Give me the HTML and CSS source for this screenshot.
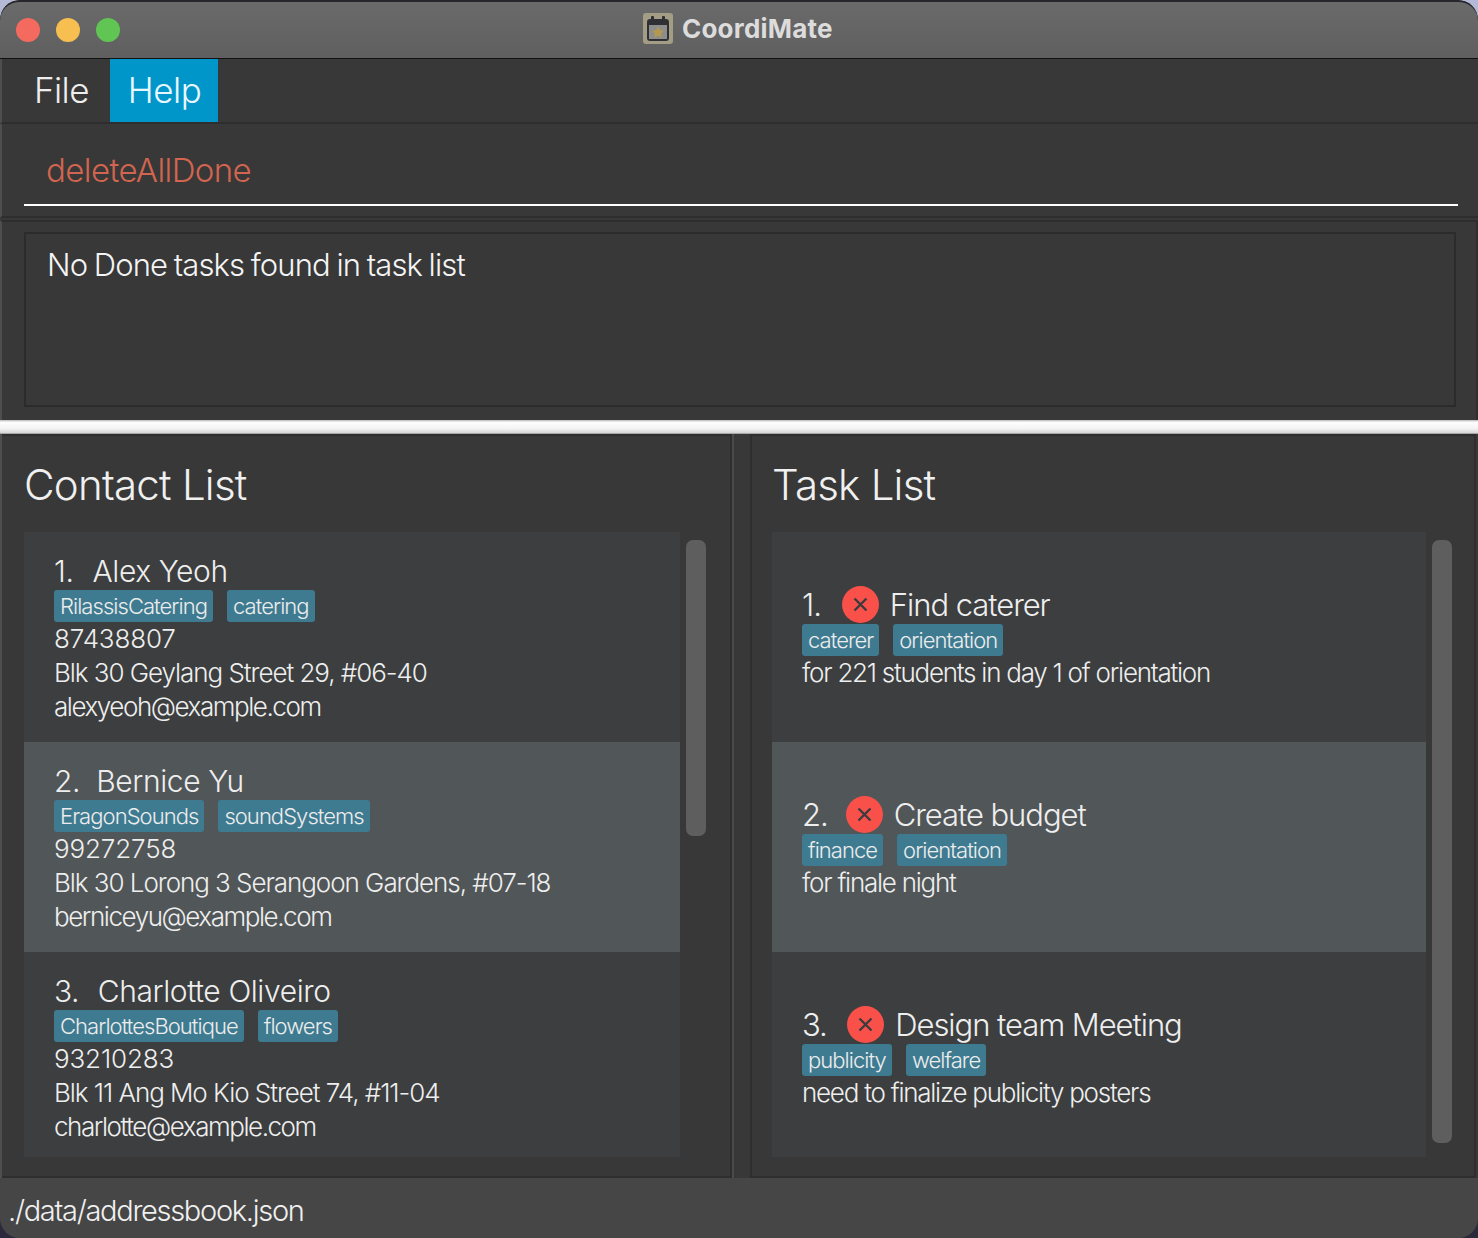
FILE: index.html
```html
<!DOCTYPE html>
<html lang="en">
<head>
<meta charset="utf-8">
<title>CoordiMate</title>
<link rel="stylesheet" href="styles.css">
</head>
<body>
<div class="window">
  <header class="titlebar">
    <div class="lights"><span class="light red"></span><span class="light yellow"></span><span class="light green"></span></div>
    <div class="app-title">
      <svg class="app-icon" width="30" height="31" viewBox="0 0 30 31"><rect width="30" height="31" rx="3" fill="#a39d86"/><rect x="4" y="6" width="22" height="22" rx="3" fill="#2f3033"/><rect x="8" y="3" width="3" height="6" rx="1" fill="#2f3033"/><rect x="19" y="3" width="3" height="6" rx="1" fill="#2f3033"/><rect x="6" y="12" width="18" height="14" fill="#8d8d8b"/><path d="M15 13.5l1.9 3.7 4.1.6-3 2.9.7 4-3.7-1.9-3.7 1.9.7-4-3-2.9 4.1-.6z" fill="#b39a4e"/></svg>
      <span class="app-name">CoordiMate</span>
    </div>
  </header>
  <nav class="menubar">
    <span class="menu-item">File</span>
    <span class="menu-item active">Help</span>
  </nav>
  <section class="command"><div class="command-input">deleteAllDone</div></section>
  <section class="result"><div class="result-box">No Done tasks found in task list</div></section>
  <div class="splitter"></div>
  <main class="panes">
    <section class="pane contact-pane">
      <h2 class="pane-title">Contact List</h2>
      <div class="list-wrap">
        <div class="list">
          <article class="cell contact">
            <div class="name"><span class="idx">1.</span>&nbsp; Alex Yeoh</div>
            <div class="tags"><span class="tag">RilassisCatering</span><span class="tag">catering</span></div>
            <div class="line phone">87438807</div>
            <div class="line address">Blk 30 Geylang Street 29, #06-40</div>
            <div class="line email">alexyeoh@example.com</div>
          </article>
          <article class="cell contact alt">
            <div class="name"><span class="idx">2.</span>&nbsp; Bernice Yu</div>
            <div class="tags"><span class="tag">EragonSounds</span><span class="tag">soundSystems</span></div>
            <div class="line phone">99272758</div>
            <div class="line address">Blk 30 Lorong 3 Serangoon Gardens, #07-18</div>
            <div class="line email">berniceyu@example.com</div>
          </article>
          <article class="cell contact last">
            <div class="name"><span class="idx">3.</span>&nbsp; Charlotte Oliveiro</div>
            <div class="tags"><span class="tag">CharlottesBoutique</span><span class="tag">flowers</span></div>
            <div class="line phone">93210283</div>
            <div class="line address">Blk 11 Ang Mo Kio Street 74, #11-04</div>
            <div class="line email">charlotte@example.com</div>
          </article>
        </div>
        <div class="scroll-track"><div class="thumb short"></div></div>
      </div>
    </section>
    <div class="divider"></div>
    <section class="pane task-pane">
      <h2 class="pane-title">Task List</h2>
      <div class="list-wrap">
        <div class="list">
          <article class="cell task">
            <div class="name task-name"><span class="idx">1.</span><svg class="status" viewBox="0 0 37 37"><circle cx="18.5" cy="18.5" r="18.5" fill="#f9504a"/><path d="M12.5 12.5l12 12M24.500 12.500l-12 12" stroke="#3b3b3f" stroke-width="2.400" fill="none"/></svg><span>Find caterer</span></div>
            <div class="tags"><span class="tag">caterer</span><span class="tag">orientation</span></div>
            <div class="line description">for 221 students in day 1 of orientation</div>
          </article>
          <article class="cell task alt">
            <div class="name task-name"><span class="idx">2.</span><svg class="status" viewBox="0 0 37 37"><circle cx="18.5" cy="18.5" r="18.5" fill="#f9504a"/><path d="M12.5 12.5l12 12M24.500 12.500l-12 12" stroke="#3b3b3f" stroke-width="2.400" fill="none"/></svg><span>Create budget</span></div>
            <div class="tags"><span class="tag">finance</span><span class="tag">orientation</span></div>
            <div class="line description">for finale night</div>
          </article>
          <article class="cell task last">
            <div class="name task-name"><span class="idx">3.</span><svg class="status" viewBox="0 0 37 37"><circle cx="18.5" cy="18.5" r="18.5" fill="#f9504a"/><path d="M12.5 12.5l12 12M24.500 12.500l-12 12" stroke="#3b3b3f" stroke-width="2.400" fill="none"/></svg><span>Design team Meeting</span></div>
            <div class="tags"><span class="tag">publicity</span><span class="tag">welfare</span></div>
            <div class="line description">need to finalize publicity posters</div>
          </article>
        </div>
        <div class="scroll-track"><div class="thumb long"></div></div>
      </div>
    </section>
  </main>
  <footer class="status-bar">./data/addressbook.json</footer>
</div>
</body>
</html>
```

FILE: styles.css
```css
* { box-sizing: border-box; }
html, body { margin: 0; height: 100%; }
body {
  width: 1478px;
  height: 1238px;
  overflow: hidden;
  background: linear-gradient(#b4b9d6 0 50%, #2a2a3c 50% 100%);
  font-family: "Inter", "Liberation Sans", sans-serif;
  color: #eeeeee;
}
.window {
  width: 1478px;
  height: 1238px;
  border-radius: 20px;
  overflow: hidden;
  display: flex;
  flex-direction: column;
  background: #383838;
}
.titlebar {
  height: 59px;
  flex: none;
  display: flex;
  align-items: center;
  padding: 0 0 2px 16px;
  background: linear-gradient(#6a6a6a, #5f5f5f);
  border-top: 2px solid #26262c;
  border-bottom: 1px solid #111111;
  border-radius: 20px 20px 0 0;
}
.lights { display: flex; gap: 16px; margin-top: 1px; }
.light { width: 24px; height: 24px; border-radius: 50%; }
.red { background: #f46a5e; }
.yellow { background: #f6bf4f; }
.green { background: #61c554; }
.app-title {
  display: flex;
  align-items: center;
  gap: 9px;
  margin: -1px 0 0 523px;
}
.app-icon { flex: none; }
.app-name {
  font-size: 26px;
  font-weight: 700;
  color: #dcdcdc;
  letter-spacing: 0.2px;
}
.menubar {
  height: 65px;
  flex: none;
  display: flex;
  padding-left: 15px;
  background: #383838;
  border-bottom: 2px solid #2e2e2e;
  border-left: 2px solid #4e4e4e;
}
.menu-item {
  height: 63px;
  padding: 0 17px;
  font-size: 35px;
  line-height: 63px;
  font-weight: 300;
  letter-spacing: -0.6px;
}
.menu-item.active {
  background: #0096c9;
  color: #e8f7ff;
  margin-left: 4px;
  padding: 0 17px 0 18px;
  letter-spacing: -0.5px;
}
.command {
  height: 94px;
  flex: none;
  padding: 0 20px 0 22px;
  border-left: 2px solid #4e4e4e;
  border-bottom: 2px solid #2e2e2e;
}
.command-input {
  height: 82px;
  padding-left: 22px;
  border-bottom: 2px solid #ffffff;
  font-size: 33px;
  line-height: 92px;
  font-weight: 300;
  letter-spacing: -0.6px;
  color: #d2654f;
}
.result {
  height: 200px;
  flex: none;
  margin-top: 2px;
  padding: 10px 20px 11px 22px;
  border-top: 2px solid #2e2e2e;
  border-left: 2px solid #4e4e4e;
  border-right: 2px solid #2e2e2e;
}
.result-box {
  height: 175px;
  border: 2px solid #2b2b2b;
  padding: 12px 21px;
  font-size: 31px;
  line-height: 38px;
  font-weight: 300;
  letter-spacing: -0.85px;
  word-spacing: -1.4px;
  color: #f4f4f4;
}
.splitter {
  height: 14px;
  flex: none;
  background: linear-gradient(#c9c9c9 0 1px, #ffffff 2px, #f4f4f4 60%, #d8d8d8 90%, #8c8c8c 100%);
}
.panes {
  height: 744px;
  flex: none;
  display: flex;
  background: #383838;
  border-left: 2px solid #4e4e4e;
}
.pane {
  display: flex;
  flex-direction: column;
  border-top: 2px solid #2e2e2e;
  border-bottom: 2px solid #2e2e2e;
  border-right: 2px solid #2e2e2e;
  padding-left: 22px;
}
.contact-pane { width: 730px; }
.task-pane { width: 726px; border-left: 2px solid #2e2e2e; padding-left: 20px; }
.divider {
  width: 18px;
  flex: none;
  border-left: 2px solid #4a4a4a;
}
.pane-title {
  margin: 0;
  height: 96px;
  font-size: 42px;
  line-height: 98px;
  font-weight: 300;
  letter-spacing: -0.75px;
  color: #f0f0f0;
  flex: none;
}
.list-wrap { display: flex; }
.list { flex: none; }
.contact-pane .list { width: 656px; }
.task-pane .list { width: 654px; }
.cell {
  height: 210px;
  padding: 20px 30px 0 30px;
  background: #3c3e3f;
}
.cell.alt { background: #515658; }
.cell.last { height: 205px; }
.task { padding-top: 54px; }
.name {
  font-size: 30px;
  line-height: 38px;
  font-weight: 300;
  letter-spacing: -0.4px;
  color: #eeeeee;
}
.cell:nth-child(1) .idx { margin-right: 3px; }
.cell:nth-child(3) .idx { margin-right: 2.5px; }
.task-name {
  display: flex;
  align-items: center;
  font-size: 31px;
  letter-spacing: -1.05px;
}
.status { width: 37px; height: 37px; margin: -1px 11px 0 18px; flex: none; }
.tags { display: flex; gap: 14px; height: 32px; }
.tag {
  height: 32px;
  padding: 0 6px;
  border-radius: 3px;
  background: #3e7b91;
  font-size: 22px;
  line-height: 32px;
  font-weight: 300;
  letter-spacing: -0.95px;
  color: #ececec;
}
.line {
  font-size: 26px;
  line-height: 34px;
  font-weight: 300;
  color: #eeeeee;
}
.phone { letter-spacing: -0.15px; }
.address { letter-spacing: -1.05px; }
.email { letter-spacing: -1.45px; }
.description { letter-spacing: -1.25px; }
.scroll-track { padding: 8px 0 0 6px; }
.thumb { width: 20px; border-radius: 7px; background: #5e5e5e; }
.thumb.short { height: 296px; }
.thumb.long { height: 603px; }
.status-bar {
  flex: 1;
  background: #464646;
  padding-left: 8px;
  font-size: 29px;
  line-height: 66px;
  font-weight: 300;
  letter-spacing: -1.3px;
  color: #f0f0f0;
}
```
